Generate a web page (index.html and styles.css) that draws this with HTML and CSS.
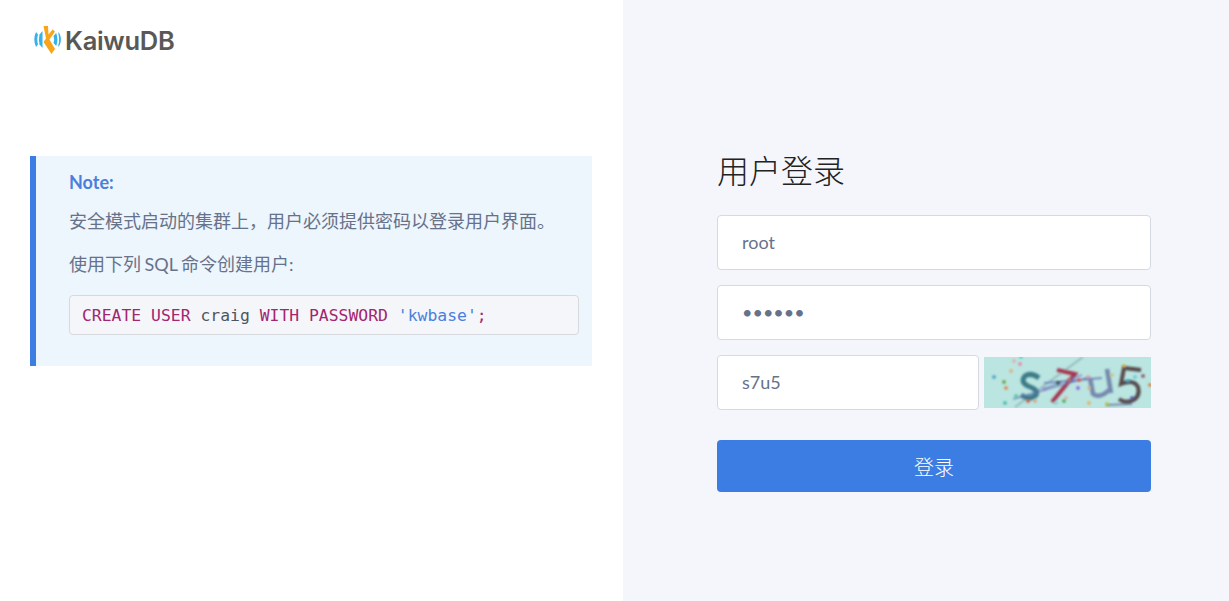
FILE: index.html
```html
<!DOCTYPE html>
<html lang="zh-CN">
<head>
<meta charset="utf-8">
<title>KaiwuDB 用户登录</title>
<link rel="stylesheet" href="styles.css">
</head>
<body>
<main class="page">
  <section class="intro">
    <div class="logo">
      <svg class="logo-mark" width="30" height="30" viewBox="0 0 30 30" aria-hidden="true">
        <path d="M3 7 L5 9.5 Q3.6 14.5 5 19.5 L3 22 Q-0.4 14.5 3 7Z" fill="#35b2ea"/>
        <path d="M6.5 9.5 L9.5 6 L9.5 23 L6.5 19.5 Q5.4 14.5 6.5 9.5Z" fill="#35b2ea"/>
        <path d="M10.5 1 L15 1 L15.5 9.5 L19.5 4.5 L22 6.5 L16.5 14.5 L22 24 L18.5 29 L10.5 17 L13 13.5Z" fill="#f9a51a"/>
        <path d="M20.5 11 L23.2 8 Q25.6 14.5 23.2 21 L20.5 18 Q21.8 14.5 20.5 11Z" fill="#35b2ea"/>
        <path d="M25 7 L26.8 9 Q29 14.5 26.8 20 L25 22 Q27 14.5 25 7Z" fill="#35b2ea"/>
      </svg>
      <span class="logo-text">KaiwuDB</span>
    </div>
    <aside class="note">
      <p class="note-title">Note:</p>
      <p class="note-line">安全模式启动的集群上，用户必须提供密码以登录用户界面。</p>
      <p class="note-line">使用下列 SQL 命令创建用户:</p>
      <pre class="code"><span class="kw">CREATE USER</span> craig <span class="kw">WITH PASSWORD</span> <span class="str">'kwbase'</span><span class="kw">;</span></pre>
    </aside>
  </section>
  <section class="login">
    <h1 class="login-title">用户登录</h1>
    <form class="form">
      <input class="field" type="text" value="root" aria-label="用户名">
      <input class="field field-pass" type="password" value="kwbase" aria-label="密码">
      <div class="captcha-row">
        <input class="field field-captcha" type="text" value="s7u5" aria-label="验证码">
        <svg class="captcha" width="167" height="51" viewBox="0 0 167 51" role="img" aria-label="验证码图片">
          <defs><filter id="soft" x="-5%" y="-5%" width="110%" height="110%"><feGaussianBlur stdDeviation="0.8"/></filter></defs>
          <rect width="167" height="51" fill="#bbe5e0"/>
          <g filter="url(#soft)" fill="none">
            <path d="M31 50 L99 0" stroke="#8fb8bd" stroke-width="1.6"/>
            <path d="M55 21 Q47 15 41 19 Q36 25 44 29 Q55 33 52 38 Q46 44 37 38" stroke="#3d7b88" stroke-width="5"/>
            <path d="M73 13 L91 17 L68 45" stroke="#a5364f" stroke-width="4"/>
            <path d="M29 42 L106 20 M59 32 L98 18 M60 26 L118 21" stroke="#6270b8" stroke-width="1.3"/>
            <path d="M106 21 L109 37 Q116 42 125 33 M123 12 L127 36" stroke="#7488ad" stroke-width="4.5"/>
            <path d="M157 13 L140 11 L137 27 Q150 22 154 30 Q157 40 147 44 Q140 46 135 42" stroke="#544a4e" stroke-width="4"/>
            <path d="M122 48 L148 47" stroke="#6a6f9b" stroke-width="1.5"/>
          </g>
          <g filter="url(#soft)">
            <circle cx="10" cy="20" r="1.8" fill="#3a96c8"/><circle cx="20" cy="25" r="1.8" fill="#5a9a30"/>
            <circle cx="22" cy="31" r="1.8" fill="#e07a3c"/><circle cx="32" cy="39" r="1.8" fill="#44c09c"/>
            <circle cx="21" cy="46" r="1.8" fill="#2db7a5"/><circle cx="44" cy="44" r="1.8" fill="#d8443c"/>
            <circle cx="51" cy="44" r="1.8" fill="#d99a7c"/><circle cx="27" cy="14" r="1.8" fill="#dfa874"/>
            <circle cx="30" cy="4" r="1.8" fill="#e6a8a8"/><circle cx="36" cy="7" r="1.8" fill="#e87aa4"/>
            <circle cx="37" cy="0" r="1.8" fill="#38d0c4"/><circle cx="60" cy="32" r="1.8" fill="#a98ed8"/>
            <circle cx="74" cy="26" r="1.8" fill="#34523a"/><circle cx="72" cy="46" r="1.8" fill="#7ad0d8"/>
            <circle cx="82" cy="41" r="1.8" fill="#e0a8a0"/><circle cx="80" cy="44" r="1.8" fill="#2fa84c"/>
            <circle cx="85" cy="23" r="1.8" fill="#e06a3c"/><circle cx="95" cy="23" r="1.8" fill="#ea4a3c"/>
            <circle cx="104" cy="20" r="1.8" fill="#e89aa8"/><circle cx="94" cy="31" r="1.8" fill="#8a4ae8"/>
            <circle cx="105" cy="31" r="1.8" fill="#e0b080"/><circle cx="105" cy="46" r="1.8" fill="#e8a850"/>
            <circle cx="128" cy="18" r="1.8" fill="#cfc070"/><circle cx="123" cy="47" r="1.8" fill="#bfc030"/>
            <circle cx="140" cy="9" r="1.8" fill="#e8b040"/><circle cx="144" cy="24" r="1.8" fill="#35b8e0"/>
            <circle cx="151" cy="20" r="1.8" fill="#5ac8e0"/><circle cx="159" cy="19" r="1.8" fill="#884060"/>
            <circle cx="166" cy="28" r="1.8" fill="#e07030"/><circle cx="148" cy="41" r="1.8" fill="#5050b0"/>
          </g>
        </svg>
      </div>
      <button class="submit" type="button">登录</button>
    </form>
  </section>
</main>
</body>
</html>
```
FILE: styles.css
```css
* { box-sizing: border-box; }
html, body { margin: 0; height: 100%; }
body {
  background: #fff;
  font-family: Lato, "Noto Sans CJK SC", sans-serif;
  color: #5f6b80;
}
.page { display: flex; height: 601px; overflow: hidden; }
.intro { width: 623px; padding: 25px 31px 0 30px; }
.logo { display: flex; align-items: center; gap: 2px; height: 30px; padding-left: 3px; }
.logo-mark { flex: none; }
.logo-text {
  font-family: Inter, "Liberation Sans", sans-serif;
  font-size: 25.5px;
  font-weight: 600;
  color: #585858;
  letter-spacing: -0.3px;
}
.note {
  margin-top: 101px;
  height: 210px;
  padding: 14px 13px 0 33px;
  background: #edf5fd;
  border-left: 6px solid #3b7de2;
}
.note-title { margin: 0; font-size: 18px; line-height: 24px; font-weight: 700; color: #4a80dc; }
.note-line { margin: 0; font-size: 18px; line-height: 24px; color: #66728a; word-spacing: -1px; }
.note-title + .note-line { margin-top: 15px; }
.note-line + .note-line { margin-top: 19px; }
.code {
  margin: 19px 0 0;
  height: 40px;
  padding: 0 12px;
  font-family: "DejaVu Sans Mono", monospace;
  font-size: 16.4px;
  line-height: 39px;
  color: #4f5560;
  background: #f4f6fa;
  border: 1px solid #d6d9de;
  border-radius: 4px;
}
.kw { color: #a3246f; }
.str { color: #4a80dc; }
.login { flex: 1; background: #f4f6fb; padding: 149px 78px 0 94px; }
.login-title { margin: 0; font-size: 32px; line-height: 43px; font-weight: 300; color: #222; }
.form { display: flex; flex-direction: column; margin-top: 23px; }
.field {
  display: block;
  width: 100%;
  height: 55px;
  padding: 0 24px 2px;
  font: 18px Lato, "Noto Sans CJK SC", sans-serif;
  color: #66728a;
  background: #fff;
  border: 1px solid #d5d9e2;
  border-radius: 4px;
  outline: none;
}
.field-pass { margin-top: 15px; }
.captcha-row { display: flex; align-items: center; gap: 5px; margin-top: 15px; }
.field-captcha { flex: none; width: 262px; }
.captcha { flex: none; display: block; }
.submit {
  margin-top: 30px;
  height: 52px;
  font: 300 20px "Noto Sans CJK SC", sans-serif;
  color: #fff;
  background: #3b7de2;
  border: 0;
  border-radius: 4px;
}
```
